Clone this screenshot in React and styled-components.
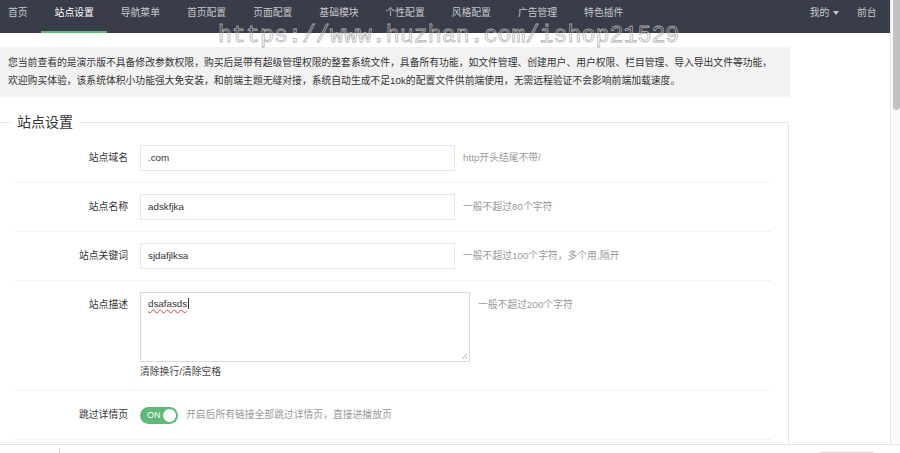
import styled, { createGlobalStyle } from 'styled-components';

const GlobalStyle = createGlobalStyle`
  html, body { margin: 0; padding: 0; background: #fff; }
  body {
    font-family: "Liberation Sans", "Noto Sans CJK SC", sans-serif;
    color: #333;
    overflow: hidden;
  }
  * { box-sizing: border-box; }
`;

const navItems = ['首页', '站点设置', '导航菜单', '首页配置', '页面配置', '基础模块', '个性配置', '风格配置', '广告管理', '特色插件'];

const fields = [
  { label: '站点域名', value: '.com', hint: 'http开头结尾不带/' },
  { label: '站点名称', value: 'adskfjka', hint: '一般不超过80个字符' },
  { label: '站点关键词', value: 'sjdafjlksa', hint: '一般不超过100个字符，多个用,隔开' },
];

const App = () => {
  return (
    <Page>
      <GlobalStyle />
      <Body>
        <Main>
          <NavBar>
            <NavList>
              {navItems.map((item, i) => (
                <NavItem key={item} $active={i === 1}>{item}</NavItem>
              ))}
            </NavList>
            <NavList>
              <NavItem $tight>我的<Caret /></NavItem>
              <NavItem>前台</NavItem>
            </NavList>
          </NavBar>

          <Watermark>https://www.huzhan.com/ishop21529</Watermark>

          <Content>
            <Notice>
              您当前查看的是演示版不具备修改参数权限，购买后是带有超级管理权限的整套系统文件，具备所有功能，如文件管理、创建用户、用户权限、栏目管理、导入导出文件等功能，<br />
              欢迎购买体验，该系统体积小功能强大免安装，和前端主题无缝对接，系统自动生成不足10k的配置文件供前端使用，无需远程验证不会影响前端加载速度。
            </Notice>

            <FieldSet>
              <Legend>站点设置</Legend>
              {fields.map((f) => (
                <FormRow key={f.label}>
                  <Label>{f.label}</Label>
                  <Input>{f.value}</Input>
                  <Hint>{f.hint}</Hint>
                </FormRow>
              ))}

              <FormRow $top>
                <Label>站点描述</Label>
                <div>
                  <TextBox>
                    <Typed>dsafasds</Typed>
                    <Grip viewBox="0 0 8 8">
                      <path d="M7 2 L2 7 M7 5 L5 7" stroke="#999" strokeWidth="0.8" />
                    </Grip>
                  </TextBox>
                  <Helper>清除换行/清除空格</Helper>
                </div>
                <Hint>一般不超过200个字符</Hint>
              </FormRow>

              <FormRow $center>
                <Label>跳过详情页</Label>
                <Toggle>
                  ON
                  <Knob />
                </Toggle>
                <Hint>开启后所有链接全部跳过详情页，直接进播放页</Hint>
              </FormRow>
            </FieldSet>
          </Content>
        </Main>
        <ScrollTrack>
          <ScrollThumb />
        </ScrollTrack>
      </Body>
      <Footer>
        <FooterDivider />
        <FooterButton />
      </Footer>
    </Page>
  );
};

export default App;

const Page = styled.div`
  width: 900px;
  height: 453px;
  display: flex;
  flex-direction: column;
  overflow: hidden;
`;

const Body = styled.div`
  flex: 1;
  display: flex;
  min-height: 0;
`;

const Main = styled.div`
  position: relative;
  flex: 1;
  overflow: hidden;
`;

const NavBar = styled.div`
  height: 33px;
  background: #393d49;
  display: flex;
  justify-content: space-between;
`;

const NavList = styled.div`
  display: flex;
  &:first-child { margin-left: -5.5px; }
`;

const NavItem = styled.div`
  position: relative;
  height: 33px;
  padding: ${(p) => (p.$tight ? '0 4px 0 13.5px' : '0 13.5px')};
  line-height: 25px;
  font-size: 9.8px;
  color: ${(p) => (p.$active ? '#fff' : 'rgba(255,255,255,0.72)')};
  display: flex;
  align-items: flex-start;
  white-space: nowrap;

  &::after {
    content: '';
    display: ${(p) => (p.$active ? 'block' : 'none')};
    position: absolute;
    left: 0;
    right: 0;
    bottom: 0;
    height: 2px;
    background: #5fb878;
  }
`;

const Caret = styled.span`
  display: inline-block;
  margin: 11px 0 0 4px;
  width: 0;
  height: 0;
  border-left: 3.5px solid transparent;
  border-right: 3.5px solid transparent;
  border-top: 4px solid rgba(255,255,255,0.72);
`;

const Watermark = styled.div`
  position: absolute;
  top: 20px;
  left: 218px;
  font-family: "Liberation Mono", "DejaVu Sans Mono", monospace;
  font-size: 23.3px;
  line-height: 32px;
  color: transparent;
  -webkit-text-stroke: 0.8px rgba(175, 175, 175, 0.95);
  white-space: nowrap;
  pointer-events: none;
  z-index: 2;
`;

const Content = styled.div`
  width: 790px;
  padding-top: 14px;
`;

const Notice = styled.div`
  background: #f2f2f2;
  padding: 7px 8px;
  font-size: 9.8px;
  line-height: 18px;
  color: #333;
  white-space: nowrap;
`;

const FieldSet = styled.fieldset`
  margin: 15px 1px 0 0;
  padding: 2px 17px 20px 15px;
  border: 1px solid #e6e6e6;
  border-left: none;
  border-radius: 0 2px 0 0;
  min-width: 0;
`;

const Legend = styled.legend`
  margin-left: -4px;
  padding: 0 6px;
  font-size: 14px;
  line-height: 20px;
  color: #333;
`;

const FormRow = styled.div`
  display: flex;
  align-items: ${(p) => (p.$top ? 'flex-start' : 'center')};
  padding: ${(p) => (p.$top ? '11px 0 9px' : '11px 0')};
  border-bottom: 1px solid #f2f2f2;
`;

const Label = styled.div`
  width: 113px;
  margin-right: 12px;
  text-align: right;
  font-size: 9.8px;
  line-height: 26px;
  color: #333;
  flex-shrink: 0;
`;

const Input = styled.div`
  width: 315px;
  height: 26px;
  padding: 0 7px;
  border: 1px solid #e6e6e6;
  font-size: 9.8px;
  line-height: 24px;
  color: #333;
  flex-shrink: 0;
`;

const Hint = styled.div`
  margin-left: 8px;
  font-size: 9.8px;
  line-height: 26px;
  color: #999;
  white-space: nowrap;
`;

const TextBox = styled.div`
  position: relative;
  width: 330px;
  height: 70px;
  padding: 4px 7px;
  border: 1px solid #d9d9d9;
  font-size: 9.8px;
  line-height: 14px;
`;

const Typed = styled.span`
  color: #333;
  text-decoration: underline wavy #e0403a;
  text-decoration-thickness: 0.7px;
  text-underline-offset: 2px;
  border-right: 1px solid #333;
  padding-right: 1px;
`;

const Grip = styled.svg`
  position: absolute;
  right: 1px;
  bottom: 1px;
  width: 8px;
  height: 8px;
`;

const Helper = styled.div`
  font-size: 9.8px;
  line-height: 19px;
  color: #444;
`;

const Toggle = styled.div`
  width: 38px;
  height: 17px;
  border-radius: 9px;
  background: #5fb878;
  display: flex;
  align-items: center;
  justify-content: space-between;
  padding: 0 2px 0 7px;
  font-size: 9px;
  color: #fff;
  flex-shrink: 0;
`;

const Knob = styled.span`
  width: 13px;
  height: 13px;
  border-radius: 50%;
  background: #fff;
`;

const ScrollTrack = styled.div`
  width: 10px;
  background: #fafafa;
  border-left: 1px solid #e6e6e6;
  padding: 0 1px 0 1px;
`;

const ScrollThumb = styled.div`
  width: 7px;
  height: 110px;
  margin-left: 1px;
  border-radius: 0 0 4px 4px;
  background: #c2c2c2;
`;

const Footer = styled.div`
  height: 9px;
  border-top: 1px solid #e2e2e2;
  display: flex;
  justify-content: space-between;
  padding: 3px 26px 0 59px;
`;

const FooterDivider = styled.div`
  width: 1px;
  background: #d6d6d6;
`;

const FooterButton = styled.div`
  width: 54px;
  margin-top: 4px;
  border-top: 1px solid #d6d6d6;
`;
